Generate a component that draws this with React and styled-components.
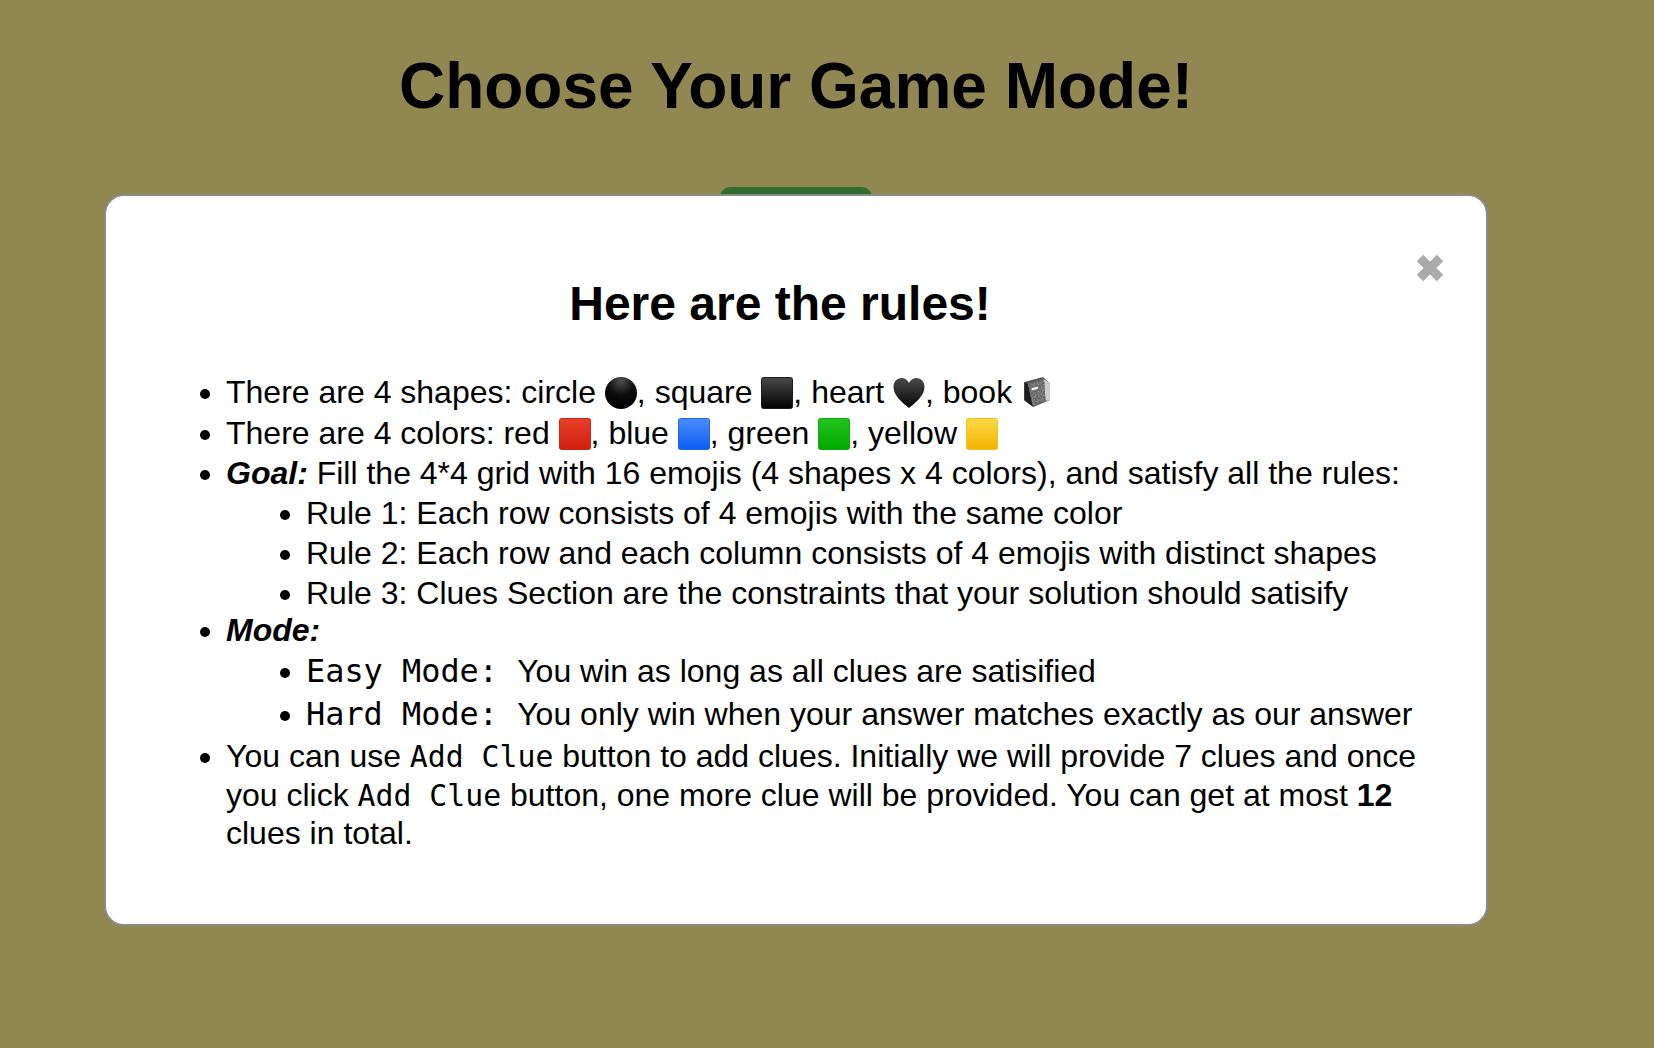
import React from 'react';
import styled, { createGlobalStyle } from 'styled-components';

const GlobalStyle = createGlobalStyle`
  html, body {
    margin: 0;
    padding: 0;
    height: 100%;
    background-color: #918751;
    overflow: hidden;
  }
`;

const Page = styled.div`
  position: relative;
  height: 1048px;
  box-sizing: border-box;
  padding-right: 62px;
  font-family: "Liberation Sans", Arial, sans-serif;
  color: #000;
  display: flex;
  flex-direction: column;
  align-items: center;
`;

const Title = styled.h1`
  margin: 49px 0 0;
  font-size: 64px;
  line-height: 74px;
  font-weight: 700;
`;

const ModeButton = styled.div`
  margin-top: 64px;
  width: 152px;
  height: 60px;
  background-color: #326d2f;
  border-radius: 10px;
`;

const Modal = styled.div`
  position: absolute;
  left: 104px;
  top: 194px;
  width: 1384px;
  height: 732px;
  box-sizing: border-box;
  padding: 80px 60px 0 70px;
  background: #fff;
  border: 2px solid #8a8a8a;
  border-radius: 20px;
`;

const Close = styled.svg`
  position: absolute;
  top: 58px;
  right: 42px;
  width: 28px;
  height: 28px;
`;

const Heading = styled.h2`
  margin: 0 0 43px;
  padding-right: 42px;
  text-align: center;
  font-size: 48px;
  line-height: 55px;
  font-weight: 700;
`;

const List = styled.ul`
  margin: 0;
  padding-left: 50px;
  font-size: 32px;
  line-height: 37px;
  list-style: disc;
`;

const SubList = styled.ul`
  margin: 0;
  padding-left: 80px;
  list-style: disc;
`;

const Item = styled.li`
  margin-top: ${p => p.$gap || 0}px;
  line-height: ${p => p.$line || 37}px;
`;

const Code = styled.code`
  font-family: "DejaVu Sans Mono", monospace;
  font-size: ${p => p.$size}px;
  line-height: 1;
  white-space: pre;
`;

const Emoji = styled.svg`
  display: inline-block;
  width: 32px;
  height: 32px;
  vertical-align: -6px;
`;

const tiles = {
  red: ['#e8402c', '#d01f0c', '#c92a18'],
  blue: ['#4d8dff', '#0a5cf0', '#1a66ee'],
  green: ['#23c41c', '#00a800', '#0aa80a'],
  yellow: ['#ffd84a', '#f0b400', '#f2c21a'],
  black: ['#4a4a4a', '#000000', '#1c1c1c'],
};

const Tile = ({ color }) => {
  const [top, bottom, edge] = tiles[color];
  return (
    <Emoji viewBox="0 0 32 32">
      <defs>
        <linearGradient id={`tile-${color}`} x1="0" y1="0" x2="0" y2="1">
          <stop offset="0" stopColor={top} />
          <stop offset="1" stopColor={bottom} />
        </linearGradient>
      </defs>
      <rect x="0.5" y="0.5" width="31" height="31" rx="2" fill={`url(#tile-${color})`} stroke={edge} />
    </Emoji>
  );
};

const Circle = () => (
  <Emoji viewBox="0 0 32 32">
    <defs>
      <radialGradient id="ball" cx="0.5" cy="0.12" r="0.8">
        <stop offset="0" stopColor="#4f4f4f" />
        <stop offset="0.55" stopColor="#0d0d0d" />
        <stop offset="1" stopColor="#000" />
      </radialGradient>
    </defs>
    <circle cx="16" cy="16" r="16" fill="url(#ball)" />
  </Emoji>
);

const Heart = () => (
  <Emoji viewBox="0 0 32 32">
    <defs>
      <linearGradient id="heart" x1="0" y1="0" x2="0" y2="1">
        <stop offset="0" stopColor="#4a4a4a" />
        <stop offset="1" stopColor="#050505" />
      </linearGradient>
    </defs>
    <path
      d="M16 31C10 26 0.500 19 0.500 10C0.500 4.500 4 1 8.500 1C12 1 14.800 3 16 6C17.200 3 20 1 23.500 1C28 1 31.500 4.500 31.500 10C31.500 19 22 26 16 31z"
      fill="url(#heart)"
    />
  </Emoji>
);

const Book = () => (
  <Emoji viewBox="-3 0 32 32">
    <defs>
      <filter id="marble" x="0" y="0" width="1" height="1">
        <feTurbulence type="fractalNoise" baseFrequency="0.7" numOctaves="2" seed="4" />
        <feColorMatrix values="0 0 0 0 0.12  0 0 0 0 0.12  0 0 0 0 0.12  3 0 0 0 -0.9" />
        <feComposite in2="SourceGraphic" operator="in" />
        <feMerge>
          <feMergeNode in="SourceGraphic" />
          <feMergeNode />
        </feMerge>
      </filter>
    </defs>
    <path d="M0.300 5 L19 0 L26 6.700 L26 23 L9.300 30 L0.300 23.300 z" fill="#5a5a5a" />
    <path d="M20 2 L26 6.700 L26 23 L21.500 24 z" fill="#cfcfcf" />
    <path d="M0.300 5 L4 7 L8.500 28.500 L9.300 30 L0.300 23.300 z" fill="#1f1f1f" />
    <path d="M4 7 L20 2.500 L21.500 24 L9 28.500 z" fill="#8c8c8c" filter="url(#marble)" />
    <path d="M7 11 L14 9 L14.500 12 L7.500 14 z" fill="#f2f2f2" stroke="#444" strokeWidth="0.500" />
  </Emoji>
);

export default function App() {
  return (
    <Page>
      <GlobalStyle />
      <Title>Choose Your Game Mode!</Title>
      <ModeButton />
      <Modal>
        <Close viewBox="0 0 28 28">
          <path d="M4 4 L24 24 M24 4 L4 24" stroke="#aaa" strokeWidth="9" />
        </Close>
        <Heading>Here are the rules!</Heading>
        <List>
          <Item>
            There are 4 shapes: circle <Circle />, square <Tile color="black" />, heart <Heart />, book <Book />
          </Item>
          <Item $gap={4}>
            There are 4 colors: red <Tile color="red" />, blue <Tile color="blue" />, green <Tile color="green" />, yellow <Tile color="yellow" />
          </Item>
          <Item $gap={3}>
            <b><i>Goal:</i></b> Fill the 4*4 grid with 16 emojis (4 shapes x 4 colors), and satisfy all the rules:
            <SubList>
              <Item $gap={3}>Rule 1: Each row consists of 4 emojis with the same color</Item>
              <Item $gap={3}>Rule 2: Each row and each column consists of 4 emojis with distinct shapes</Item>
              <Item $gap={3}>Rule 3: Clues Section are the constraints that your solution should satisify</Item>
            </SubList>
          </Item>
          <Item>
            <b><i>Mode:</i></b>
            <SubList>
              <Item $gap={4}><Code $size={31.9}>{'Easy Mode: '}</Code>You win as long as all clues are satisified</Item>
              <Item $gap={6}><Code $size={31.9}>{'Hard Mode: '}</Code>You only win when your answer matches exactly as our answer</Item>
            </SubList>
          </Item>
          <Item $gap={4} $line={38.5}>
            You can use <Code $size={29.8}>Add Clue</Code> button to add clues. Initially we will provide 7 clues and once you click <Code $size={29.8}>Add Clue</Code> button, one more clue will be provided. You can get at most <b>12</b> clues in total.
          </Item>
        </List>
      </Modal>
    </Page>
  );
}
